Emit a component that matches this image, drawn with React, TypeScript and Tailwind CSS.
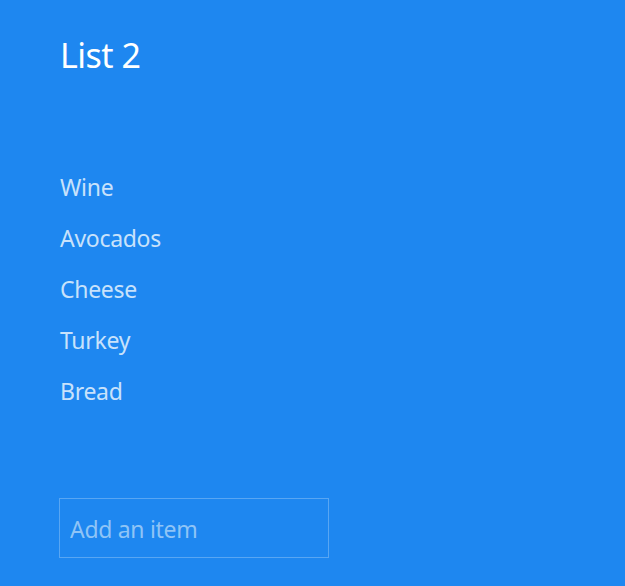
import React from "react";

export default function App() {
  const items = ["Wine", "Avocados", "Cheese", "Turkey", "Bread"];
  return (
    <div
      className="w-[625px] h-[586px] bg-[#1e87f0] overflow-hidden"
      style={{ fontFamily: '"Noto Sans", "Open Sans", sans-serif' }}
    >
      <div className="pl-[60px] pt-[30px]">
        <h1 className="text-[34px] leading-[50px] text-white font-normal tracking-[-0.5px]">List 2</h1>
        <ul className="mt-[82px] flex flex-col">
          {items.map((it) => (
            <li key={it} className="h-[51px] leading-[51px] text-[23px] text-[#c8e2fb] tracking-[-0.3px]">
              {it}
            </li>
          ))}
        </ul>
        <div className="mt-[81px] -ml-px w-[270px] h-[60px] border border-[#58a6f3] flex items-center pl-[10px] pt-[2px]">
          <input
            className="w-full bg-transparent outline-none text-[23px] text-white placeholder:text-[#8fc4f6] tracking-[-0.3px]"
            placeholder="Add an item"
          />
        </div>
      </div>
    </div>
  );
}
